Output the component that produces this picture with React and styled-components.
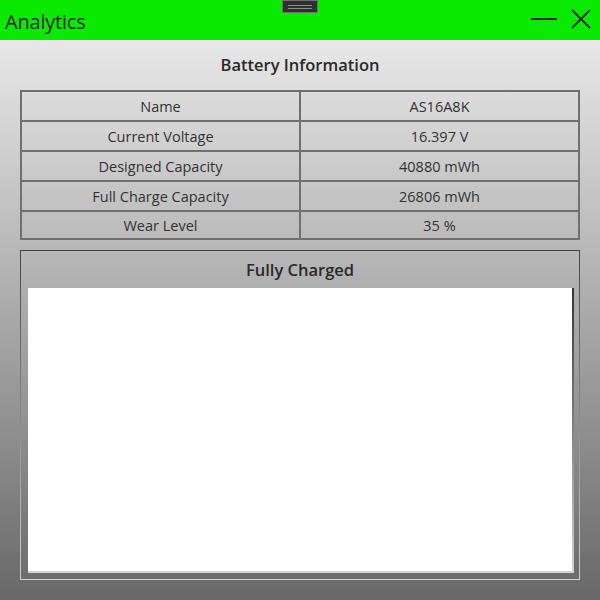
import React from "react";
import styled, { createGlobalStyle } from "styled-components";

const Global = createGlobalStyle`
  html, body { margin: 0; padding: 0; }
  body { width: 600px; height: 600px; overflow: hidden; font-family: "Open Sans", "Noto Sans", sans-serif; }
`;

const Window = styled.div`
  width: 600px;
  height: 600px;
  display: flex;
  flex-direction: column;
`;

const TitleBar = styled.div`
  position: relative;
  height: 40px;
  flex: none;
  background: #0aea00;
  display: flex;
  align-items: center;
  padding: 0 9px 0 5px;
`;

const Title = styled.div`
  flex: 1;
  font-size: 20px;
  color: #262626;
  letter-spacing: -0.2px;
  margin-top: 3px;
`;

const Controls = styled.div`
  display: flex;
  align-items: center;
  gap: 14px;
  margin-top: -2px;
`;

const Handle = styled.div`
  position: absolute;
  left: 282px;
  top: 0;
  width: 34px;
  height: 11px;
  background: #2f2f2f;
  border: 1px solid #707070;
  display: flex;
  flex-direction: column;
  justify-content: center;
  align-items: center;
  gap: 2px;
`;

const HandleLine = styled.div`
  width: 24px;
  height: 1px;
  background: #8c8c8c;
`;

const Body = styled.div`
  flex: 1;
  background: linear-gradient(#e8e8e8, #686868);
  padding: 0 20px 20px;
  display: flex;
  flex-direction: column;
`;

const Heading = styled.div`
  height: 50px;
  display: flex;
  align-items: center;
  justify-content: center;
  font-size: 16.5px;
  font-weight: 600;
  color: #2a2a2a;
  padding-bottom: 2px;
  box-sizing: border-box;
`;

const Table = styled.div`
  display: grid;
  grid-template-columns: 1fr 1fr;
  border-top: 2px solid #707070;
  border-left: 2px solid #707070;
`;

const Cell = styled.div`
  height: ${(p) => p.$h}px;
  border-right: 2px solid #707070;
  border-bottom: 2px solid #707070;
  display: flex;
  align-items: center;
  justify-content: center;
  font-size: 14.5px;
  color: #333;
`;

const GroupBox = styled.div`
  margin-top: 10px;
  height: 328px;
  border: 1px solid #666;
  border-image: linear-gradient(#444, #cfcfcf) 1;
  display: flex;
  flex-direction: column;
`;

const GroupHeader = styled.div`
  height: 37px;
  display: flex;
  align-items: center;
  justify-content: center;
  font-size: 16.5px;
  font-weight: 600;
  color: #2a2a2a;
`;

const Chart = styled.div`
  flex: 1;
  margin: 0 5px 6px 7px;
  background: #fff;
  border-style: solid;
  border-width: 0 2px 2px 0;
  border-image: linear-gradient(#333, #d4d4d4) 1;
`;

const rows = [
  ["Name", "AS16A8K"],
  ["Current Voltage", "16.397 V"],
  ["Designed Capacity", "40880 mWh"],
  ["Full Charge Capacity", "26806 mWh"],
  ["Wear Level", "35 %"],
];

export default function App() {
  return (
    <Window>
      <Global />
      <TitleBar>
        <Title>Analytics</Title>
        <Controls>
          <svg width="26" height="4" viewBox="0 0 26 4">
            <line x1="0" y1="2" x2="26" y2="2" stroke="#2b2b2b" strokeWidth="2" />
          </svg>
          <svg width="20" height="20" viewBox="0 0 20 20">
            <path d="M1 1 L19 19 M19 1 L1 19" stroke="#2b2b2b" strokeWidth="1.8" fill="none" />
          </svg>
        </Controls>
        <Handle>
          <HandleLine />
          <HandleLine />
        </Handle>
      </TitleBar>
      <Body>
        <Heading>Battery Information</Heading>
        <Table>
          {rows.map(([k, v], i) => (
            <React.Fragment key={k}>
              <Cell $h={i === rows.length - 1 ? 26 : 28}>{k}</Cell>
              <Cell $h={i === rows.length - 1 ? 26 : 28}>{v}</Cell>
            </React.Fragment>
          ))}
        </Table>
        <GroupBox>
          <GroupHeader>Fully Charged</GroupHeader>
          <Chart />
        </GroupBox>
      </Body>
    </Window>
  );
}
